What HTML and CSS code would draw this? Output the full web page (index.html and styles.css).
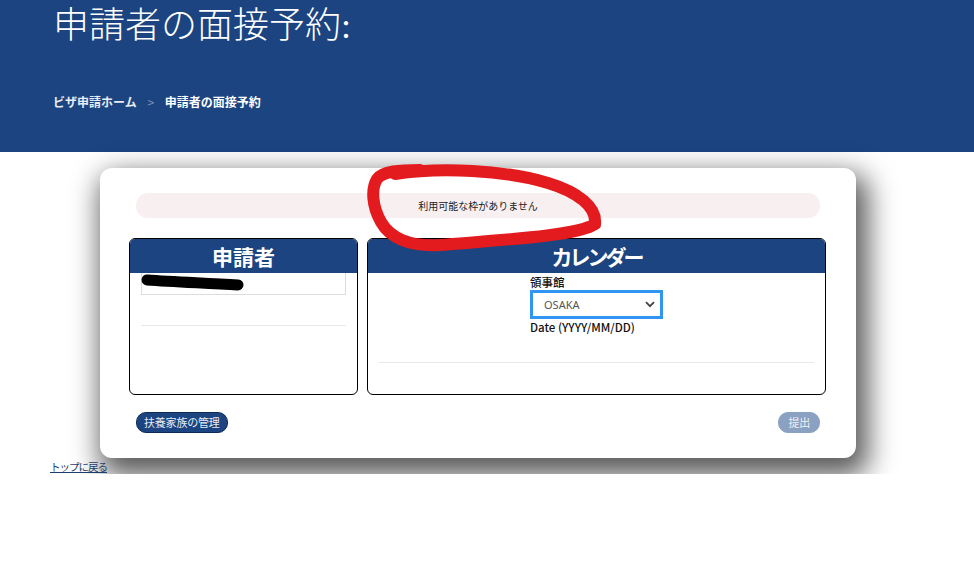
FILE: index.html
```html
<!DOCTYPE html>
<html>
<head>
  <meta charset="UTF-8">
  <title>申請者の面接予約</title>
  <link rel="stylesheet" href="styles.css">
</head>
<body>
  <header class="banner">
    <h1 class="title">申請者の面接予約:</h1>
    <nav class="crumbs">
      <a href="#">ビザ申請ホーム</a>
      <span class="sep">&gt;</span>
      <span class="current">申請者の面接予約</span>
    </nav>
  </header>

  <div class="card">
    <div class="alert">利用可能な枠がありません</div>

    <div class="panels">
      <section class="panel panel-applicant">
        <h2 class="panel-head">申請者</h2>
        <div class="panel-body">
          <div class="name-box"></div>
          <hr class="rule rule-left">
        </div>
      </section>

      <section class="panel panel-calendar">
        <h2 class="panel-head">カレンダー</h2>
        <div class="panel-body">
          <div class="field">
            <label class="field-label" for="consulate">領事館</label>
            <div class="select-wrap">
              <select id="consulate" class="select">
                <option>OSAKA</option>
              </select>
              <svg class="chevron" width="10" height="7" viewBox="0 0 10 7">
                <path d="M1 1.2 L5 5.2 L9 1.2" fill="none" stroke="#444" stroke-width="1.8"/>
              </svg>
            </div>
            <div class="field-label">Date (YYYY/MM/DD)</div>
          </div>
          <hr class="rule rule-right">
        </div>
      </section>
    </div>

    <div class="actions">
      <button class="btn">扶養家族の管理</button>
      <button class="btn btn-disabled" disabled>提出</button>
    </div>
  </div>

  <a class="back" href="#">トップに戻る</a>

  <!-- annotations drawn over the screenshot -->
  <svg class="scribble" width="974" height="587" viewBox="0 0 974 587">
    <path d="M395 174 C 440 167, 505 170, 548 183 C 578 192, 597 207, 595 224 C 578 236, 500 240, 440 245 C 410 247, 390 238, 381 222 C 372 206, 371 189, 377 179 C 383 171, 400 170, 420 170"
          fill="none" stroke="#e31b1e" stroke-width="12" stroke-linecap="round"/>
    <path d="M147 280 C 175 282, 205 283, 238 285" fill="none" stroke="#000" stroke-width="11" stroke-linecap="round"/>
  </svg>
</body>
</html>
```

FILE: styles.css
```css
body {
  margin: 0;
  background: #ffffff;
  color: #000;
  font-family: "Noto Sans CJK JP", "Noto Sans", sans-serif;
}

.banner {
  background: #1b4480;
  color: white;
  height: 152px;
  padding: 0 53px;
  box-sizing: border-box;
}

.title {
  margin: 0;
  padding-top: 4px;
  font-family: "Liberation Serif", "Noto Sans CJK JP", serif;
  font-weight: 300;
  font-size: 36px;
  line-height: 44px;
}

.crumbs {
  margin-top: 46px;
  font-size: 12px;
  font-weight: bold;
  line-height: 16px;
}

.crumbs a {
  color: #e8ecf3;
  text-decoration: none;
}

.crumbs .sep {
  color: #7f95b8;
  font-weight: normal;
  margin: 0 8px;
}

.crumbs .current {
  color: white;
}

.card {
  width: 756px;
  height: 290px;
  margin: 16px 0 0 100px;
  box-sizing: border-box;
  padding-top: 25px;
  background: white;
  border-radius: 12px;
  box-shadow: 6px 12px 28px 6px rgba(0, 0, 0, 0.65);
}

.alert {
  margin: 0 36px;
  height: 25px;
  border-radius: 12px;
  background: #f8eff0;
  font-size: 10px;
  line-height: 25px;
  text-align: center;
  color: #222;
}

.panels {
  display: flex;
  gap: 9px;
  margin: 20px 30px 0 29px;
}

.panel {
  height: 157px;
  box-sizing: border-box;
  border: 1px solid #000;
  border-radius: 6px;
  overflow: hidden;
}

.panel-applicant {
  width: 229px;
}

.panel-calendar {
  flex: 1;
}

.panel-head {
  margin: 0;
  height: 34px;
  background: #1b4480;
  color: white;
  font-size: 21px;
  font-weight: bold;
  line-height: 34px;
  text-align: center;
}

.panel-calendar .panel-head {
  letter-spacing: -3px;
}

.panel-body {
  padding: 0 11px;
}

.name-box {
  height: 22px;
  box-sizing: border-box;
  border: 1px solid #dcdcdc;
  border-top: none;
}

.rule {
  border: none;
  border-top: 1px solid #e8e8e8;
  margin: 0;
}

.rule-left {
  margin-top: 30px;
}

.field {
  width: 133px;
  margin: 0 auto;
  padding-top: 1px;
}

.field-label {
  display: block;
  font-size: 11.5px;
  font-weight: 500;
  line-height: 16px;
  color: #111;
  white-space: nowrap;
}

.select-wrap {
  position: relative;
  height: 29px;
}

.select {
  appearance: none;
  width: 133px;
  height: 29px;
  box-sizing: border-box;
  border: 3px solid #3196f3;
  border-radius: 0;
  background: white;
  padding: 0 0 0 11px;
  font-family: "Noto Sans", sans-serif;
  font-size: 11px;
  color: #555;
  outline: none;
}

.chevron {
  position: absolute;
  right: 8px;
  top: 11px;
}

.rule-right {
  margin-top: 27px;
}

.actions {
  display: flex;
  justify-content: space-between;
  margin: 17px 36px 0 36px;
}

.btn {
  height: 21px;
  padding: 0 7px;
  border: 1px solid #0e2b55;
  border-radius: 10px;
  background: #1b4480;
  color: #e8ecf5;
  font-family: "Noto Sans CJK JP", sans-serif;
  font-size: 11px;
  line-height: 19px;
  letter-spacing: -0.2px;
}

.btn-disabled {
  background: #8ba1c1;
  border-color: #8ba1c1;
  color: #eef1f7;
  padding: 0 9px;
}

.back {
  display: block;
  width: fit-content;
  margin: 2px 0 0 50px;
  font-size: 10.5px;
  line-height: 14px;
  letter-spacing: -1px;
  color: #1b3f6e;
}

.scribble {
  position: absolute;
  top: 0;
  left: 0;
  pointer-events: none;
}
```
